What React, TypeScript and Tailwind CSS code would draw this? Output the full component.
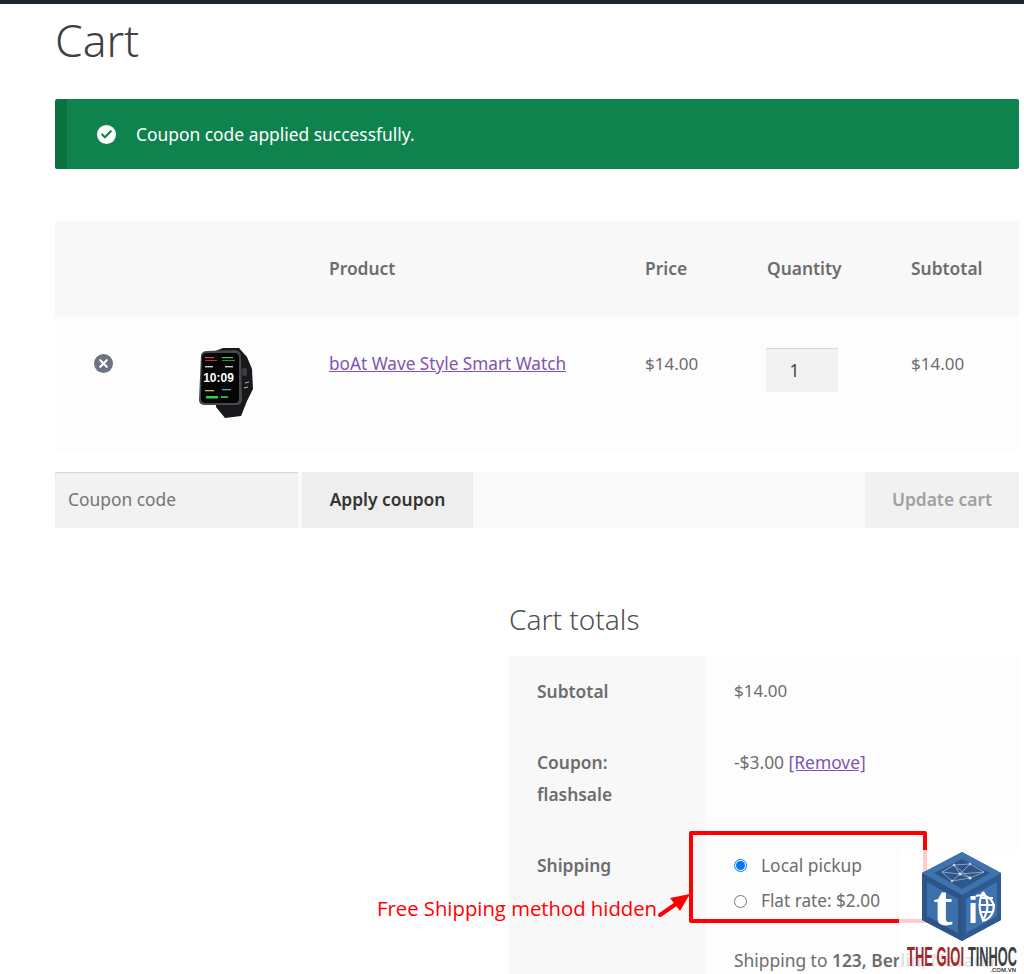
import { Check, X } from "lucide-react";

const font = "[font-family:'Noto_Sans',sans-serif]";

function Watch() {
  return (
    <svg width="74" height="76" viewBox="0 0 74 76">
      <path d="M24 7 L34 3 L50 3 L58 12 L63 24 L64 44 L58 56 L52 71 L36 73 L27 62 Z" fill="#17181a" />
      <path d="M12 10 Q13 6 18 6 L46 5 Q52 6 52 11 L53 55 Q53 60 47 60 L16 60 Q10 60 10 55 Z" fill="#46484c" />
      <path d="M13 12 Q14 8 18 8 L45 8 Q50 8 50 12 L50 54 Q50 58 46 58 L17 58 Q12 58 12 54 Z" fill="#050506" />
      <rect x="16" y="12" width="9" height="1.2" fill="#e0483c" />
      <rect x="16" y="15" width="12" height="1" fill="#a03a34" />
      <rect x="33" y="12" width="11" height="1.2" fill="#46c659" />
      <rect x="33" y="15" width="13" height="1" fill="#2f8f45" />
      <rect x="16" y="21" width="8" height="1.4" fill="#cccccc" />
      <rect x="36" y="21" width="8" height="1.4" fill="#cccccc" />
      <text x="29.5" y="37" textAnchor="middle" fill="#ffffff" fontSize="12" fontWeight="700" fontFamily="Liberation Sans, sans-serif">10:09</text>
      <rect x="16" y="45" width="9" height="1.3" fill="#d6c22e" />
      <rect x="33" y="44" width="9" height="1.3" fill="#2fb8c9" />
      <rect x="17" y="51" width="12" height="2.5" fill="#31d24a" />
      <rect x="32" y="51" width="7" height="2" fill="#31a848" />
      <rect x="53" y="23" width="5" height="8" rx="2" fill="#3a3c40" />
      <path d="M56 38 L60 37 M55 43 L59 42" stroke="#bdbdbd" strokeWidth="1" />
    </svg>
  );
}

function Logo() {
  return (
    <svg width="124" height="129" viewBox="0 0 124 129" className="block">
      <path d="M62 7 L101 28 L101 75 L62 96 L22 75 L22 28 Z" fill="#3b6ca8" />
      <path d="M62 7 L101 28 L62 50 L22 28 Z" fill="#3f73b0" />
      <path d="M62 14 L90 28 L62 44 L34 28 Z" fill="#2f5688" />
      <path d="M22 28 L62 50 L62 96 L22 75 Z" fill="#2d5487" />
      <path d="M27 37 L58 54 L58 88 L27 71 Z" fill="#3c70ad" />
      <path d="M101 28 L62 50 L62 96 L101 75 Z" fill="#2f5a90" />
      <path d="M97 37 L66 54 L66 88 L97 71 Z" fill="#3e72b0" />
      <g stroke="#c3d2e6" strokeWidth="0.6" fill="#e6edf6">
        <path d="M42 27 L54 20 L70 19 L84 27 L70 33 L52 36 Z M54 20 L60 29 L70 19 M42 27 L60 29 L84 27 M52 36 L60 29 L70 33 M54 20 L70 33" fill="none" />
        <circle cx="54" cy="20" r="1" />
        <circle cx="70" cy="19" r="1" />
        <circle cx="60" cy="29" r="1.3" />
        <circle cx="52" cy="36" r="1" />
        <circle cx="70" cy="33" r="1.3" />
      </g>
      <text x="43" y="80" textAnchor="middle" fill="#ffffff" fontSize="58" fontWeight="700" fontFamily="Liberation Serif, serif">t</text>
      <text x="73" y="78" textAnchor="middle" fill="#ffffff" fontSize="36" fontWeight="700" fontFamily="Liberation Sans, sans-serif">i</text>
      <g stroke="#ffffff" strokeWidth="2.2" fill="none">
        <path d="M76 51 A14 14 0 0 1 93 58 A14 14 0 0 1 82 76" />
        <path d="M83 47 Q76 60 83 75 M83 47 Q92 60 83 75 M80 60 L95 60 M80 53 L93 53 M80 67 L93 67" />
      </g>
      <text x="7" y="121" fill="#a3262b" fontSize="27" fontWeight="700" fontFamily="Liberation Sans, sans-serif" textLength="57" lengthAdjust="spacingAndGlyphs">THE GIOI</text>
      <text x="68" y="121" fill="#3b3f45" fontSize="27" fontWeight="700" fontFamily="Liberation Sans, sans-serif" textLength="49" lengthAdjust="spacingAndGlyphs">TINHOC</text>
      <text x="116" y="127" textAnchor="end" fill="#3b3f45" fontSize="6" fontWeight="700" fontFamily="Liberation Sans, sans-serif">.COM.VN</text>
    </svg>
  );
}

export default function App() {
  return (
    <div className={`relative h-[974px] w-[1024px] overflow-hidden bg-white ${font} text-[17.4px] text-[#6d6d6d]`}>
      <div className="h-1 bg-[#1f262b]" />
      <div className="pl-[55px] pr-[5px]">
        <h1 className="mt-[6px] h-[61px] text-[44.5px] leading-[60px] font-light text-[#404040]">Cart</h1>

        <div className="mt-[28px] flex h-[70px] items-center rounded-[2px] border-l-[12px] border-[#0c7340] bg-[#0f834d] pl-[30px] text-white">
          <span className="flex h-[19px] w-[19px] items-center justify-center rounded-full bg-white">
            <Check className="h-[13px] w-[13px] text-[#0f834d]" strokeWidth={4} />
          </span>
          <span className="ml-[20px]">Coupon code applied successfully.</span>
        </div>

        <div className="mt-[52px] flex h-[95px] items-center bg-[#f8f8f8] pl-[274px] font-semibold">
          <span className="w-[316px]">Product</span>
          <span className="w-[122px]">Price</span>
          <span className="w-[144px]">Quantity</span>
          <span>Subtotal</span>
        </div>

        <div className="flex h-[135px] items-start bg-[#fdfdfd]">
          <div className="w-[134px] pl-[39px] pt-[38px]">
            <span className="flex h-[19px] w-[19px] items-center justify-center rounded-full bg-[#6d7380]">
              <X className="h-[13px] w-[13px] text-white" strokeWidth={4} />
            </span>
          </div>
          <div className="w-[140px] pt-[29px]">
            <Watch />
          </div>
          <a className="w-[316px] pt-[35px] text-[17.2px] text-[#7f54b3] underline">boAt Wave Style Smart Watch</a>
          <span className="w-[122px] pt-[35px] text-[17px]">$14.00</span>
          <div className="w-[144px] pt-[32px]">
            <div className="-ml-px flex h-[44px] w-[72px] items-center justify-center bg-[#f2f2f2] pr-[15px] text-[#43454b] shadow-[inset_0_1px_1px_rgba(0,0,0,0.12)]">1</div>
          </div>
          <span className="pt-[35px] text-[17px]">$14.00</span>
        </div>

        <div className="mt-[21px] flex h-[56px] bg-[#fafafa]">
          <div className="flex w-[243px] items-center bg-[#f2f2f2] pb-[2px] pl-[13px] text-[#757575] shadow-[inset_0_1px_1px_rgba(0,0,0,0.12)]">Coupon code</div>
          <div className="ml-[4px] flex w-[171px] items-center justify-center bg-[#eeeeee] pb-[2px] font-semibold text-[#333333]">Apply coupon</div>
          <div className="ml-auto flex w-[154px] items-center justify-center bg-[#f1f1f1] pb-[2px] font-semibold text-[#a0a0a0]">Update cart</div>
        </div>

        <div className="ml-[454px] mt-[71px]">
          <h2 className="h-[57px] text-[28px] leading-[40px] font-light text-[#505050]">Cart totals</h2>
          <div className="grid grid-cols-[197px_313px]">
            <div className="h-[71px] bg-[#f8f8f8] pl-[28px] pt-[22px] font-semibold">Subtotal</div>
            <div className="bg-[#fdfdfd] pl-[28px] pt-[22px] text-[17px]">$14.00</div>
            <div className="h-[103px] bg-[#f8f8f8] pl-[28px] pt-[19px] leading-[32px] font-semibold">
              Coupon:
              <br />
              flashsale
            </div>
            <div className="bg-[#fdfdfd] pl-[28px] pt-[19px] leading-[32px]">
              -$3.00 <a className="text-[#7f54b3] underline">[Remove]</a>
            </div>
            <div className="h-[160px] bg-[#f8f8f8] pl-[28px] pt-[22px] font-semibold">Shipping</div>
            <div className="bg-[#fdfdfd] pl-[28px] pt-[22px]">
              <div className="flex h-[26px] items-center">
                <span className="flex h-[13px] w-[13px] items-center justify-center rounded-full border border-[#0075ff] bg-white">
                  <span className="h-[9px] w-[9px] rounded-full bg-[#0075ff]" />
                </span>
                <span className="ml-[14px]">Local pickup</span>
              </div>
              <div className="mt-[10px] flex h-[26px] items-center">
                <span className="h-[13px] w-[13px] rounded-full border border-[#767676] bg-white" />
                <span className="ml-[14px] text-[17.2px]">Flat rate: $2.00</span>
              </div>
              <div className="mt-[33px] whitespace-nowrap">
                Shipping to <b className="font-semibold">123, Berlin, Nevada</b>
              </div>
            </div>
          </div>
        </div>
      </div>

      <div className="absolute left-[689px] top-[831px] h-[92px] w-[238px] rounded-[2px] border-[4px] border-[#ff0000]" />
      <span className="absolute left-[377px] top-[896px] text-[20.3px] leading-[24px] text-[#ff0000] [font-family:'Open_Sans',sans-serif]">Free Shipping method hidden</span>
      <svg className="absolute left-[655px] top-[890px]" width="36" height="28" viewBox="0 0 36 28">
        <path d="M5 25 L24 12" stroke="#ff0000" strokeWidth="4" strokeLinecap="round" />
        <path d="M35 4 L15 8 L25 21 Z" fill="#ff0000" />
      </svg>

      <div className="absolute left-[899px] top-[850px] h-[124px] w-[125px] bg-white/80" />
      <div className="absolute left-[900px] top-[845px]">
        <Logo />
      </div>
    </div>
  );
}
